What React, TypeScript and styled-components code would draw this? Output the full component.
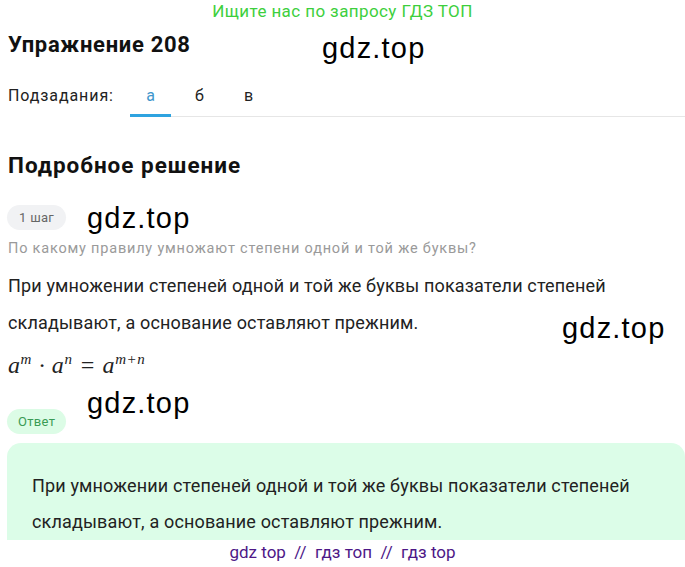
import React from "react";
import styled, { createGlobalStyle } from "styled-components";

const Global = createGlobalStyle`
  html, body { margin: 0; padding: 0; background: #fff; }
  body { font-family: Roboto, "Noto Sans", sans-serif; color: #1a1a1a; }
`;

const Page = styled.div`
  position: relative;
  width: 685px;
  height: 567px;
  overflow: hidden;
  padding: 0 0 0 8px;
  box-sizing: border-box;
`;

const TopBanner = styled.div`
  text-align: center;
  color: #3dcf3d;
  font-size: 17px;
  letter-spacing: 0.4px;
  line-height: 22px;
  margin-left: -8px;
`;

const Title = styled.h1`
  margin: 10px 0 0;
  font-size: 22px;
  letter-spacing: 0.7px;
  line-height: 26px;
  font-weight: 700;
  color: #111;
`;

const TabsRow = styled.div`
  display: flex;
  align-items: flex-end;
  margin-top: 28px;
`;

const TabsLabel = styled.span`
  font-size: 16px;
  letter-spacing: 0.9px;
  color: #222;
  line-height: 20px;
  padding-bottom: 11px;
  width: 122px;
`;

const Tabs = styled.div`
  display: flex;
  gap: 8px;
  flex: 1;
  border-bottom: 1px solid #e6e6e6;
`;

const Tab = styled.div<{ $active?: boolean }>`
  width: 41px;
  text-align: center;
  font-size: 16px;
  line-height: 20px;
  padding-bottom: 8px;
  color: ${(p) => (p.$active ? "#4196cc" : "#222")};
  border-bottom: 3px solid ${(p) => (p.$active ? "#2ea3e0" : "transparent")};
  margin-bottom: -1px;
`;

const SectionTitle = styled.h2`
  margin: 34px 0 0;
  font-size: 22.5px;
  letter-spacing: 1px;
  line-height: 28px;
  font-weight: 700;
  color: #111;
`;

const Badge = styled.span<{ $green?: boolean }>`
  display: inline-flex;
  align-items: center;
  height: 25px;
  padding: 0 ${(p) => (p.$green ? 11 : 12)}px;
  border-radius: 13px;
  font-size: 13px;
  letter-spacing: 0.3px;
  background: ${(p) => (p.$green ? "#dcfce6" : "#f1f2f4")};
  color: ${(p) => (p.$green ? "#3a9b55" : "#666")};
`;

const BadgeRow = styled.div<{ $top: number }>`
  display: flex;
  margin-top: ${(p) => p.$top}px;
  margin-left: -1px;
`;

const Question = styled.p`
  margin: 9px 0 0;
  font-size: 14.5px;
  letter-spacing: 0.8px;
  line-height: 20px;
  color: #9a9a9a;
`;

const Para = styled.p`
  margin: 8px 0 0;
  font-size: 18px;
  letter-spacing: 0.15px;
  line-height: 37px;
  color: #222;
`;

const Formula = styled.div`
  margin-top: 10px;
  font-family: "Liberation Serif", "DejaVu Serif", serif;
  font-style: italic;
  font-size: 24px;
  line-height: 28px;
  color: #222;
  letter-spacing: 0.6px;
  sup { font-size: 15px; vertical-align: 9px; line-height: 0; }
`;

const AnswerBox = styled.div`
  margin-top: 9px;
  margin-left: -1px;
  background: #dcfde8;
  border-radius: 14px 14px 0 0;
  padding: 25px 24px 0 25px;
  height: 97px;
  box-sizing: border-box;
`;

const AnswerText = styled.p`
  margin: 0;
  font-size: 18px;
  letter-spacing: 0.15px;
  line-height: 36px;
  color: #222;
`;

const Footer = styled.div`
  text-align: center;
  margin-left: -8px;
  font-size: 17px;
  line-height: 24px;
  color: #4d1787;
`;

const Watermark = styled.span<{ $x: number; $y: number }>`
  position: absolute;
  left: ${(p) => p.$x}px;
  top: ${(p) => p.$y}px;
  font-family: "Liberation Sans", Arial, sans-serif;
  font-size: 29px;
  letter-spacing: 1.2px;
  line-height: 34px;
  color: #000;
  pointer-events: none;
`;

export default function App() {
  return (
    <>
      <Global />
      <Page>
        <TopBanner>Ищите нас по запросу ГДЗ ТОП</TopBanner>
        <Title>Упражнение 208</Title>
        <TabsRow>
          <TabsLabel>Подзадания:</TabsLabel>
          <Tabs>
            <Tab $active>а</Tab>
            <Tab>б</Tab>
            <Tab>в</Tab>
          </Tabs>
        </TabsRow>
        <SectionTitle>Подробное решение</SectionTitle>
        <BadgeRow $top={26}>
          <Badge>1 шаг</Badge>
        </BadgeRow>
        <Question>По какому правилу умножают степени одной и той же буквы?</Question>
        <Para>
          При умножении степеней одной и той же буквы показатели степеней
          <br />
          складывают, а основание оставляют прежним.
        </Para>
        <Formula>
          a<sup>m</sup> · a<sup>n</sup> = a<sup>m+n</sup>
        </Formula>
        <BadgeRow $top={30}>
          <Badge $green>Ответ</Badge>
        </BadgeRow>
        <AnswerBox>
          <AnswerText>
            При умножении степеней одной и той же буквы показатели степеней
            <br />
            складывают, а основание оставляют прежним.
          </AnswerText>
        </AnswerBox>
        <Footer>gdz top &nbsp;//&nbsp; гдз топ &nbsp;//&nbsp; гдз top</Footer>
        <Watermark $x={322} $y={31}>gdz.top</Watermark>
        <Watermark $x={87} $y={201}>gdz.top</Watermark>
        <Watermark $x={562} $y={311}>gdz.top</Watermark>
        <Watermark $x={87} $y={386}>gdz.top</Watermark>
      </Page>
    </>
  );
}
